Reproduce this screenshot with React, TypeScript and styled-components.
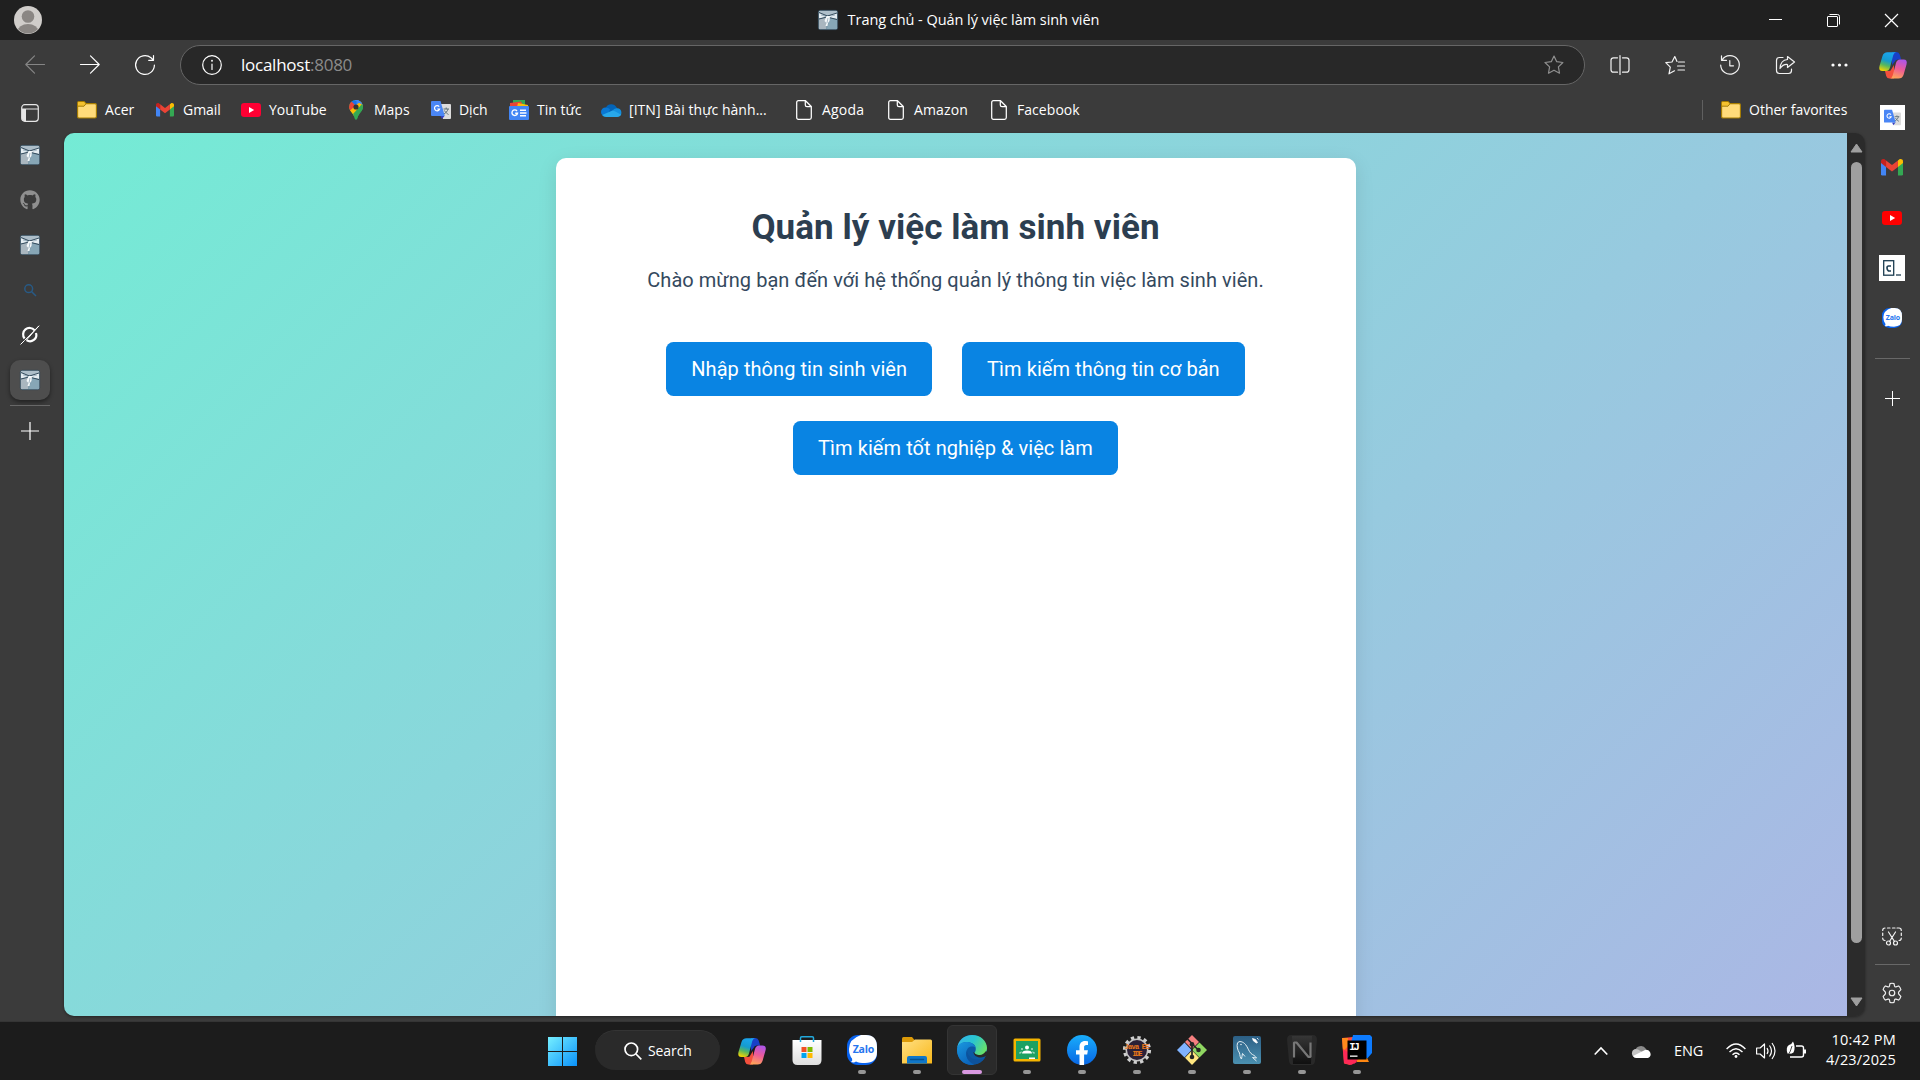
import React from "react";
import styled, { createGlobalStyle } from "styled-components";
import { FaGithub } from "react-icons/fa";

const Global = createGlobalStyle`
  * { box-sizing: border-box; }
  html, body { margin: 0; padding: 0; background: #3b3b3b; }
  body { width: 1920px; height: 1080px; overflow: hidden; font-family: "Open Sans", "Noto Sans", sans-serif; color: #fff; }
  svg { display: block; flex: none; overflow: visible; }
`;

const Desktop = styled.div`
  width: 1920px; height: 1080px; display: flex; flex-direction: column; background: #3b3b3b; overflow: hidden;
`;
const TitleBar = styled.header`
  height: 40px; flex: none; background: #202020; display: grid; grid-template-columns: 1fr auto 1fr; align-items: center;
`;
const AvatarSlot = styled.div`padding-left: 14px;`;
const TitleGroup = styled.div`
  display: flex; align-items: center; gap: 10px; padding-right: 3px;
`;
const Label = styled.span<{ $size?: number; $ls?: number; $color?: string }>`
  font-size: ${(p) => p.$size ?? 14}px;
  letter-spacing: ${(p) => p.$ls ?? 0}px;
  color: ${(p) => p.$color ?? "#fff"};
  line-height: 20px; white-space: nowrap;
`;
const WindowButtons = styled.div`display: flex; justify-content: flex-end;`;
const WindowButton = styled.div`
  width: 58px; height: 40px; display: flex; align-items: center; justify-content: center;
`;
const Toolbar = styled.div`
  height: 50px; flex: none; display: flex; align-items: center; padding-left: 7px;
`;
const ToolCell = styled.div<{ $w?: number }>`
  width: ${(p) => p.$w ?? 55}px; height: 50px; display: flex; align-items: center; justify-content: center;
`;
const AddressBar = styled.div`
  width: 1405px; height: 40px; margin: 0 7px 0 8px; border: 1px solid #666; border-radius: 20px; background: #282828;
  display: flex; align-items: center; padding: 0 20px 0 21px;
`;
const Url = styled.span`
  flex: 1; margin-left: 19px; font-size: 17px; line-height: 24px; letter-spacing: -0.25px; color: #fff;
  i { font-style: normal; color: #8b8b8b; }
`;
const Body = styled.div`
  height: 931px; flex: none; display: grid; grid-template-columns: 64px 1801px 55px;
`;
const LeftRail = styled.aside`
  padding: 5px 0 0 10px; display: flex; flex-direction: column; width: 50px;
`;
const RailTab = styled.div<{ $active?: boolean; $h?: number }>`
  width: 40px; height: ${(p) => p.$h ?? 40}px; margin-bottom: 5px; border-radius: 10px;
  display: flex; align-items: center; justify-content: center; flex: none;
  background: ${(p) => (p.$active ? "#4e4e4e" : "transparent")};
  box-shadow: ${(p) => (p.$active ? "0 2px 4px rgba(0,0,0,.45)" : "none")};
`;
const Rule = styled.div<{ $w: number }>`width: ${(p) => p.$w}px; height: 1px; background: #686868; flex: none;`;
const Center = styled.main`display: flex; flex-direction: column;`;
const Bookmarks = styled.nav`
  height: 43px; padding: 0 0 3px 13px; display: flex; align-items: center;
`;
const Bookmark = styled.div<{ $w: number }>`
  width: ${(p) => p.$w}px; display: flex; align-items: center; gap: 8px; flex: none;
`;
const IconSlot = styled.div`width: 20px; height: 20px; display: flex; align-items: center; justify-content: center; flex: none;`;
const OtherFavorites = styled.div`
  margin-left: auto; width: 163px; padding-left: 18px; border-left: 1px solid #606060; height: 20px;
  display: flex; align-items: center; gap: 8px;
`;
const Viewport = styled.div`
  height: 883px; display: flex; border-radius: 10px; overflow: hidden; box-shadow: 0 1px 3px rgba(0,0,0,.4);
`;
const Page = styled.div`
  width: 1783px; height: 933px; padding-top: 25px; background: linear-gradient(135deg, #74ebd5, #acb6e5);
  font-family: Roboto, sans-serif; display: flex; justify-content: center;
`;
const Card = styled.section`
  width: 800px; height: 883px; background: #fff; border-radius: 10px; box-shadow: 0 5px 19px rgba(0,0,0,.1);
  padding-top: 49px; text-align: center;
`;
const Heading = styled.h1`
  margin: 0; font-size: 35px; line-height: 41px; font-weight: 700; color: #2c3e50; letter-spacing: 0.05px;
`;
const Intro = styled.p`
  margin: 18px 0 0; font-size: 20px; line-height: 28px; color: #34495e; letter-spacing: 0.045px;
`;
const Actions = styled.div`
  margin-top: 48px; display: flex; flex-wrap: wrap; justify-content: center; gap: 25px 30px;
`;
const Action = styled.button<{ $ls: number }>`
  height: 54px; border: 0; border-radius: 7.5px; background: #0984e3; color: #fff; padding: 0 25px;
  font-family: Roboto, sans-serif; font-size: 20px; font-weight: 400; letter-spacing: ${(p) => p.$ls}px;
`;
const Scrollbar = styled.div`
  width: 18px; background: #2b2b2b; display: flex; flex-direction: column; align-items: center; padding: 10px 0 9px;
`;
const Thumb = styled.div`width: 11px; height: 781px; margin: 9px 0 auto; border-radius: 6px; background: #9f9f9f;`;
const RightRail = styled.aside`display: flex; flex-direction: column; align-items: center; padding: 2px 1px 0 0;`;
const RailApp = styled.div<{ $h?: number }>`
  height: ${(p) => p.$h ?? 50}px; width: 50px; display: flex; align-items: center; justify-content: center; flex: none;
`;
const WhiteTile = styled.div<{ $s: number }>`
  width: ${(p) => p.$s}px; height: ${(p) => p.$s}px; background: #fff; display: flex; align-items: center; justify-content: center;
`;
const Grow = styled.div`flex: 1;`;
const Taskbar = styled.footer`
  height: 59px; flex: none; background: #1c1c1c; border-top: 1px solid #353535; display: flex; padding-left: 535px;
`;
const StartSlot = styled.div<{ $w?: number }>`width: ${(p) => p.$w ?? 55}px; display: flex; align-items: center; justify-content: center;`;
const SearchPill = styled.div`
  width: 125px; height: 40px; margin: 8px 5px 0; border-radius: 20px; background: #2a2a2a; border-top: 1px solid #343434;
  display: flex; align-items: center; padding-left: 29px; gap: 6px;
`;
const TaskApp = styled.div<{ $active?: boolean }>`
  width: 50px; height: 50px; margin: 3px 2.5px 0; border-radius: 6px; display: flex; flex-direction: column; align-items: center;
  background: ${(p) => (p.$active ? "#2a2a2a" : "transparent")};
  border: 1px solid ${(p) => (p.$active ? "#343434" : "transparent")};
  padding-top: 9px;
`;
const Running = styled.div<{ $active?: boolean }>`
  width: ${(p) => (p.$active ? 20 : 8)}px; height: 4px; border-radius: 2px; margin-top: 5px;
  background: ${(p) => (p.$active ? "#d898e0" : "#969696")};
`;
const Tray = styled.div`margin-left: auto; width: 326px; display: flex; align-items: center; padding-right: 24px;`;
const TrayItem = styled.div<{ $w: number }>`width: ${(p) => p.$w}px; display: flex; align-items: center; flex: none;`;
const Clock = styled.div`margin-left: auto; display: flex; flex-direction: column; align-items: flex-end; margin-top: -2px;`;

type LineProps = { size?: number; stroke?: string; sw?: number; children: React.ReactNode };
const Line = ({ size = 20, stroke = "#f2f2f2", sw = 1.2, children }: LineProps) => (
  <svg width={size} height={size} viewBox={`0 0 ${size} ${size}`} fill="none" stroke={stroke} strokeWidth={sw} strokeLinecap="round" strokeLinejoin="round">{children}</svg>
);

const Avatar = () => (
  <svg width="28" height="28" viewBox="0 0 28 28">
    <clipPath id="av"><circle cx="14" cy="14" r="13.4" /></clipPath>
    <circle cx="14" cy="14" r="14" fill="#d0cdca" />
    <g clipPath="url(#av)" fill="#8a8683"><circle cx="14" cy="10.5" r="6.3" /><ellipse cx="14" cy="25.5" rx="10.5" ry="7.5" /></g>
  </svg>
);
const BowIcon = () => (
  <svg width="20" height="20" viewBox="0 0 20 20">
    <rect x=".3" y=".3" width="19.4" height="19.4" rx="2" fill="#7d99a9" stroke="#2d4558" strokeWidth=".6" />
    <path d="M1 1h18v5L10 5 1 6z" fill="#aebfca" />
    <path d="M1 9l8-2-1 12H1z" fill="#a9b6bf" />
    <path d="M12 8l7 2v9H9z" fill="#87a6b6" />
    <path d="M1 3l8 3 2 0 8-3v6l-7-1.500 M1 3v5.500l7-1.500" fill="#e4ecf1" />
    <path d="M1 2.500l8.500 3.500L19 3M1 9l8-2 2 .500 8 2" stroke="#283f51" strokeWidth=".9" fill="none" />
    <path d="M8.500 6h3.500l-.5 5-1.500 2-.5 3H7.500l1-3-2-2z" fill="#f4f8fa" />
    <path d="M3 5l4 1M13 6l4-1M10 8l-1 5" stroke="#8ba2b1" strokeWidth=".7" />
  </svg>
);
const Folder = () => (
  <svg width="20" height="18" viewBox="0 0 20 18">
    <path d="M.6 2Q.6.6 2 .6h5l2 2H18Q19.400 2.600 19.400 4v11.500Q19.400 17 18 17H2Q.6 17 .6 15.500z" fill="#ffdb7a" stroke="#a67c00" strokeWidth="1.100" />
    <path d="M1.100 5V2q0-.9.9-.9h5l1.600 1.700L7 4.800z" fill="#f5c12e" /><path d="M1 5.200h6l2-2.500" stroke="#a67c00" fill="none" />
  </svg>
);
const Gmail = ({ w = 18 }: { w?: number }) => (
  <svg width={w} height={w * 0.76} viewBox="0 0 24 18">
    <path d="M0 3v13.500Q0 18 1.600 18H5.500V7z" fill="#4285f4" />
    <path d="M18.500 7v11h3.900Q24 18 24 16.500V3z" fill="#34a853" />
    <path d="M18.500 1.500V8.500L24 4.300V2.400C24 .3 21.500-.8 19.800.500z" fill="#fbbc04" />
    <path d="M5.500 8.500V1.500L12 6.400l6.500-4.900v7L12 13.400z" fill="#ea4335" />
    <path d="M0 2.400v1.900l5.500 4.200v-7L4.200.500C2.500-.8 0 .3 0 2.400z" fill="#c5221f" />
  </svg>
);
const YouTube = ({ c = "#ff0033" }: { c?: string }) => (
  <svg width="20" height="14" viewBox="0 0 20 14"><rect width="20" height="14" rx="3.200" fill={c} /><path d="M8 4l5.200 3L8 10z" fill="#fff" /></svg>
);
const Maps = () => (
  <svg width="14" height="20" viewBox="0 0 14 20">
    <clipPath id="pin"><path d="M7 0a7 7 0 0 1 7 7c0 4-4.500 6-5.700 11.500C8 20 6 20 5.700 18.500 4.500 13 0 11 0 7a7 7 0 0 1 7-7z" /></clipPath>
    <g clipPath="url(#pin)">
      <rect width="14" height="20" fill="#34a853" /><path d="M0 0h9L7 7 1.500 3z" fill="#1a73e8" /><path d="M0 2l2-1 5 5-5 6-2-3z" fill="#ea4335" />
      <path d="M7 7l7-5v-2H8z" fill="#4285f4" /><path d="M1 10.500L12 1l2 5-9 10z" fill="#fbbc04" /><path d="M4 14L14 3v8L7 20z" fill="#34a853" /><path d="M14 5L5 0h9z" fill="#4285f4" />
    </g><circle cx="7" cy="7" r="2.600" fill="#333" />
  </svg>
);
const Translate = ({ s = 20 }: { s?: number }) => (
  <svg width={s} height={s} viewBox="0 0 20 20">
    <path d="M9 4h10q1 0 1 1v13q0 1-1 1h-7z" fill="#dcdcdc" />
    <path d="M12.500 9h5.500M15.200 7.500V9M17 9c-.5 2.500-2.500 4-4 5M13.500 10.500c1 2 2.500 3 4 4" stroke="#5c7078" fill="none" strokeWidth="1" />
    <path d="M9.500 16h4L11 19z" fill="#3740c0" /><path d="M1 1h8.500l4.300 15H1q-1 0-1-1V2q0-1 1-1z" fill="#4a86f5" />
    <path d="M8.200 6.600A2.600 2.600 0 1 0 8.600 9H6.300" stroke="#fff" strokeWidth="1.200" fill="none" />
  </svg>
);
const News = () => (
  <svg width="20" height="20" viewBox="0 0 20 20">
    <path d="M4 0h12v6H4z" fill="#34a853" /><path d="M1 3l11-1.500L15 7H1z" fill="#ea4335" /><path d="M9 3l10 2v2H8z" fill="#fbbc04" />
    <rect y="6" width="20" height="14" rx="1" fill="#4285f4" />
    <path d="M8 11a2.800 2.800 0 1 0 .5 2.300H6.200M11 10.300h6M11 13h6.500M11 15.700h6" stroke="#fff" strokeWidth="1.400" fill="none" />
  </svg>
);
const OneDrive = () => (
  <svg width="21" height="13" viewBox="0 0 21 13">
    <path d="M5 11A4.400 4.400 0 0 1 5 3.500 6 6 0 0 1 15.500 3.300L17 6z" fill="#0364b8" /><path d="M4.500 3.500c2 0 3 .8 4.500 1.700L6 12.500H4.500a4.500 4.500 0 0 1 0-9z" fill="#0a78d4" />
    <path d="M12 6a5 5 0 0 1 4-1.700A4.300 4.300 0 0 1 17 12.800z" fill="#1490df" /><path d="M1.200 11L12 6.300l8.300 4.500Q19 12.900 16.500 12.900H5Q2.500 12.900 1.200 11z" fill="#28a8ea" />
  </svg>
);
const PageIcon = () => (
  <svg width="16" height="20" viewBox="0 0 16 20" fill="none" stroke="#fff" strokeWidth="1.250" strokeLinejoin="round">
    <path d="M2.500.7H9.500L15.300 6.500V17.500Q15.300 19.300 13.500 19.300H2.500Q.7 19.300.7 17.500V2.500Q.7.7 2.500.7z" /><path d="M9.300.8V5q0 1.700 1.700 1.700h4.200" />
  </svg>
);
const Copilot = ({ id }: { id: string }) => (
  <svg width="28" height="27" viewBox="0 0 28 27">
    <defs>
      <linearGradient id={id + "a"} x1=".6" y1="0" x2=".3" y2="1"><stop offset="0" stopColor="#1ba5ee" /><stop offset=".45" stopColor="#159bce" /><stop offset=".7" stopColor="#56b75f" /><stop offset="1" stopColor="#eed305" /></linearGradient>
      <linearGradient id={id + "b"} x1=".7" y1="0" x2=".4" y2="1"><stop offset="0" stopColor="#ad55e8" /><stop offset=".5" stopColor="#ed5b98" /><stop offset="1" stopColor="#ffa259" /></linearGradient>
    </defs>
    <path d="M13 0h4.500q2.500 0 3.200 2.500l1.500 5h-3.500q-2.500 0-3.200 2.500L13 13z" fill="#1840c8" />
    <path d="M15 26.500h-4.500Q8 26.500 7.200 24L6 19h4q2 0 2.800-2.500L15 13z" fill="#f4503d" />
    <path d="M8.500.3H17Q15 .7 14.300 3L11 15.500Q10 19 7 19H3.500Q-.8 19 .5 14L3.500 4Q4.700.3 8.500.3z" fill={`url(#${id}a)`} />
    <path d="M19.500 26.500H11Q13 26 13.700 23.500L17 11Q18 7.500 21 7.500h3.500Q28.800 7.500 27.500 12.500L24.500 23q-1.200 3.500-5 3.500z" fill={`url(#${id}b)`} />
  </svg>
);
const Zalo = ({ s = 20 }: { s?: number }) => (
  <svg width={s} height={s} viewBox="0 0 30 30">
    <rect width="30" height="30" rx="11" fill="#0862ee" />
    <path d="M14 0h5Q30 0 30 12v5q0 11-12 11-6 0-9-1.500-2 1.500-5 .5Q6 25.500 5 23.500 2 20 2 14 2 4 14 0z" fill="#fff" />
    <text x="16.500" y="18" fontSize="10.500" fontWeight="700" textAnchor="middle" textLength="21.500" fill="#2675ef" fontFamily="Open Sans">Zalo</text>
  </svg>
);
const Windows = () => (
  <svg width="29" height="29" viewBox="0 0 29 29">
    <defs><linearGradient id="win" gradientUnits="userSpaceOnUse" x1="0" y1="0" x2="29" y2="29"><stop offset="0" stopColor="#76efff" /><stop offset="1" stopColor="#0a92fb" /></linearGradient></defs>
    <path d="M0 0h14v14H0zM15 0h14v14H15zM0 15h14v14H0zM15 15h14v14H15z" fill="url(#win)" />
  </svg>
);
const Store = () => (
  <svg width="30" height="30" viewBox="0 0 30 30">
    <defs><linearGradient id="bag" x1="0" y1="0" x2="0" y2="1"><stop offset="0" stopColor="#fff" /><stop offset="1" stopColor="#dedede" /></linearGradient></defs>
    <path d="M.5 5h29v20q0 5-5 5h-19q-5 0-5-5z" fill="url(#bag)" /><path d="M8.500 7V3q0-1.200 1.200-1.200h10.600q1.200 0 1.200 1.200v4" stroke="#22a9dc" strokeWidth="1.500" fill="none" />
    <path d="M9.500 12h5v5h-5z" fill="#f25022" /><path d="M15.500 12h5v5h-5z" fill="#7fba00" /><path d="M9.500 18h5v5h-5z" fill="#00a4ef" /><path d="M15.500 18h5v5h-5z" fill="#ffb900" />
  </svg>
);
const Explorer = () => (
  <svg width="30" height="30" viewBox="0 0 30 30">
    <defs><linearGradient id="fold" x1="0" y1="0" x2="1" y2="1"><stop offset="0" stopColor="#ffe083" /><stop offset="1" stopColor="#f9b81b" /></linearGradient></defs>
    <path d="M0 8V3.500Q0 2 1.500 2H10l3 3.500v3z" fill="#dc9a08" /><path d="M0 7h10l3-2.500h15.500Q30 4.500 30 6v22.500H0z" fill="url(#fold)" />
    <path d="M5 28.500V23q0-2 2-2h16q2 0 2 2v5.500z" fill="#1077c8" /><path d="M8.500 24.500h13" stroke="#06528f" strokeWidth="1.400" strokeLinecap="round" />
  </svg>
);
const Edge = () => (
  <svg width="30" height="30" viewBox="0 0 30 30">
    <defs>
      <linearGradient id="ea" x1="0" y1=".2" x2="1" y2=".6"><stop offset="0" stopColor="#35b5e8" /><stop offset=".5" stopColor="#2ac5cf" /><stop offset="1" stopColor="#68e26a" /></linearGradient>
      <linearGradient id="eb" x1="0" y1="0" x2=".6" y2="1"><stop offset="0" stopColor="#1a99e0" /><stop offset="1" stopColor="#0b63ba" /></linearGradient>
    </defs>
    <circle cx="15" cy="15" r="15" fill="#0c59a4" />
    <path d="M.1 13.500C1 5 7.500 0 15 0c9 0 15 6.300 15 13 0 4.500-3.300 7.200-7 7.200-3.500 0-5.500-1.200-5.500-2.200 0-.8 1.300-1.500 1.300-4C18.800 9 14 7 9.500 7 4 7 .8 11 .1 13.500z" fill="url(#ea)" />
    <path d="M0 15C0 10.500 4 7 9.300 7c5 0 9 2.700 9.400 6-1.700-2-6-2-8 .5-4 5-.5 13.500 6.500 16.300C7 31 0 24 0 15z" fill="url(#eb)" />
    <path d="M28 22.500c-2.500 4-6.500 6.500-10.500 6.600C11 27 8 21 10 16c1 5 5 8.500 10.500 8.500 3 0 5.500-1 7.500-2z" fill="#0d529c" />
    <path d="M16.500 17c0 3 3 5.500 7 5.500 2.800 0 5-1.300 5.700-1.800L31 18l-2-2c-2 2.800-4 4-6 4-3.500 0-6-1.500-6-3z" fill="#2a2a2a" />
  </svg>
);
const Classroom = () => (
  <svg width="30" height="30" viewBox="0 0 30 30">
    <rect x="1.500" y="3.500" width="27" height="23" rx="1.500" fill="#f4b400" /><rect x="4" y="6" width="22" height="18" fill="#1da163" />
    <circle cx="15" cy="12.500" r="2" fill="#fff" /><path d="M10 18.500q0-3 5-3t5 3z" fill="#fff" /><g fill="#a5d9bd"><circle cx="10" cy="14" r="1.100" /><circle cx="20" cy="14" r="1.100" /><path d="M7 18.500q0-2 3-2L9 18.500zM23 18.500q0-2-3-2l1 2z" /></g>
    <path d="M17 22.500h6V24h-6z" fill="#fff" />
  </svg>
);
const Facebook = () => (
  <svg width="30" height="30" viewBox="0 0 30 30">
    <defs><linearGradient id="fb" x1="0" y1="0" x2="0" y2="1"><stop offset="0" stopColor="#19adfb" /><stop offset="1" stopColor="#0866e4" /></linearGradient></defs>
    <circle cx="15" cy="15" r="15" fill="url(#fb)" />
    <path d="M12.500 30V19.500H9V15.200h3.500V12.200c0-4 2.200-6.200 5.500-6.200 1.600 0 3 .3 3 .3v3.600h-1.700c-1.700 0-2.200 1-2.200 2.100v3.200h3.800l-.7 4.300h-3.100V30z" fill="#fff" />
  </svg>
);
const Eclipse = () => (
  <svg width="30" height="30" viewBox="0 0 30 30">
    <circle cx="15" cy="15" r="12.400" fill="none" stroke="#cfcfcf" strokeWidth="3.400" strokeDasharray="3.250 3.243" />
    <circle cx="15" cy="15" r="10.700" fill="#2b2036" stroke="#c4c4c4" strokeWidth="1.500" />
    <text x="15" y="14" fontSize="7" fontWeight="700" fill="#ef7a1a" textAnchor="middle" fontFamily="Liberation Mono" textLength="25">Java EE</text>
    <text x="15.500" y="20.500" fontSize="7" fontWeight="700" fill="#ef7a1a" textAnchor="middle" fontFamily="Liberation Mono" textLength="10">IDE</text>
  </svg>
);
const Git = () => (
  <svg width="30" height="30" viewBox="0 0 30 30">
    <path d="M15 0l7 7-7 7-7-7z" fill="#f57f7f" /><path d="M7.500 7.500l7 7.500-7 7.500L0 15z" fill="#80b3ff" /><path d="M22.500 7.500L30 15l-7.500 7.500L15 15z" fill="#8fd661" /><path d="M15 15.500l7 7.200L15 30l-7-7.300z" fill="#ffe680" />
    <path d="M10.500 4l4.500 4.500v14M15 9l6.500 6" stroke="#252525" strokeWidth="1.700" fill="none" /><circle cx="15" cy="9.300" r="2.300" fill="#252525" /><circle cx="21.500" cy="15" r="2.300" fill="#252525" /><circle cx="15" cy="22" r="2.300" fill="#252525" />
  </svg>
);
const MySql = () => (
  <svg width="30" height="30" viewBox="0 0 30 30">
    <defs><linearGradient id="my" x1="0" y1="0" x2="0" y2="1"><stop offset="0" stopColor="#2c5f85" /><stop offset="1" stopColor="#4b90b0" /></linearGradient></defs>
    <rect x="1" y="1" width="28" height="28" rx="2" fill="url(#my)" />
    <g fill="none" stroke="#e5eff4" strokeWidth="1" strokeLinejoin="round"><path d="M9.500 24C8 23 8 20 7.500 18 5.500 15 4.500 11 5.500 8 7 5.500 11 6.500 13.500 9.500c2.500 3 3 6.500 5.500 9 2 1.500 4 2 5.500 4.500l-4-.5 4 3.500M9.500 24c.5-2 .5-3.500 1-5.500l2.500 3" /></g>
    <circle cx="9" cy="9.500" r=".7" fill="#fff" /><path d="M20.500 3.500l3 1 2 3-1 .5-3-2zM25 3l1.500 1.500" stroke="#fff" fill="#fff" strokeWidth=".8" />
  </svg>
);
const NIcon = () => (
  <svg width="30" height="30" viewBox="0 0 30 30">
    <defs><linearGradient id="nn" x1="0" y1="0" x2="0" y2="1"><stop offset="0" stopColor="#363636" /><stop offset="1" stopColor="#101010" /></linearGradient></defs>
    <path d="M4 0h22q4 0 4 5l-2 21q-.5 4-4 4H6q-3.500 0-4-4L0 5q0-5 4-5z" fill="#292929" /><path d="M5 1h20l-1 28H6z" fill="url(#nn)" />
    <path d="M7 22.500V7.500h2.500l12 14.500h2V7.500" stroke="#777" strokeWidth="2.200" fill="none" strokeLinejoin="bevel" />
  </svg>
);
const IntelliJ = () => (
  <svg width="30" height="30" viewBox="0 0 30 30">
    <path d="M0 3l11-1 1 20-4 8-6-1.500z" fill="#ff4b3c" /><path d="M0 3l6 0v8L1 17z" fill="#ff8a1c" /><path d="M1 14l6 4 8 9-6 3-7-2z" fill="#fe2857" />
    <path d="M11 0h17l2 2v16l-6 7L8 12z" fill="#0d7bfe" /><path d="M13 23h12l2 4H15z" fill="#fe8712" /><path d="M11 23h6l-5 6z" fill="#fe2857" />
    <path d="M5.500 5.500h19v19h-19z" fill="#000" /><path d="M8 20.500h7.500v1.300H8z" fill="#fff" />
    <text x="12.500" y="15.300" fontSize="10.500" fontWeight="700" textAnchor="middle" fill="#fff" fontFamily="Liberation Mono" textLength="10.500">IJ</text>
  </svg>
);
const Grok = () => (
  <svg width="20" height="20" viewBox="0 0 20 20" fill="none" stroke="#fff">
    <path d="M14.500 5.300A6.300 6.300 0 0 0 4.600 13.500M6.500 15.200A6.300 6.300 0 0 0 16 8" strokeWidth="2.200" /><path d="M.5 19.500L4.500 15.500 19 .8 6.500 15" strokeWidth="1" />
  </svg>
);

const STAR = "M10 1l2.700 5.700 6.200.8-4.500 4.400 1.100 6.300L10 15.200l-5.500 3 1.100-6.300L1 7.500l6.300-.8z";
const Plus = ({ c = "#fff", s = 17 }: { c?: string; s?: number }) => (
  <svg width={s} height={s} viewBox="0 0 17 17" stroke={c} strokeWidth="1.150"><path d="M8.500 0v17M0 8.500h17" /></svg>
);

const marks = [
  { t: "Acer", w: 78, ls: 0.05, i: <Folder /> }, { t: "Gmail", w: 86, ls: -0.05, i: <Gmail /> },
  { t: "YouTube", w: 105, ls: 0, i: <YouTube /> }, { t: "Maps", w: 85, ls: 0, i: <Maps /> },
  { t: "Dịch", w: 78, ls: -0.1, i: <Translate /> }, { t: "Tin tức", w: 92, ls: 0, i: <News /> },
  { t: "[ITN] Bài thực hành...", w: 193, ls: 0.05, i: <OneDrive /> }, { t: "Agoda", w: 92, ls: 0.2, i: <PageIcon /> },
  { t: "Amazon", w: 103, ls: 0.15, i: <PageIcon /> }, { t: "Facebook", w: 100, ls: 0.05, i: <PageIcon /> },
];
const apps = [
  { n: "store", i: <Store />, run: false }, { n: "zalo", i: <Zalo s={30} />, run: true }, { n: "files", i: <Explorer />, run: true },
  { n: "edge", i: <Edge />, run: true, active: true }, { n: "class", i: <Classroom />, run: true }, { n: "fb", i: <Facebook />, run: true },
  { n: "eclipse", i: <Eclipse />, run: true }, { n: "git", i: <Git />, run: true }, { n: "mysql", i: <MySql />, run: true },
  { n: "n", i: <NIcon />, run: true }, { n: "ij", i: <IntelliJ />, run: true },
];

export default function App() {
  return (
    <Desktop>
      <Global />
      <TitleBar>
        <AvatarSlot><Avatar /></AvatarSlot>
        <TitleGroup><BowIcon /><Label $size={14.5} $ls={-0.05}>Trang chủ - Quản lý việc làm sinh viên</Label></TitleGroup>
        <WindowButtons>
          <WindowButton><svg width="13" height="13" stroke="#fff"><path d="M0 5.500h13" /></svg></WindowButton>
          <WindowButton><svg width="13" height="13" viewBox="0 0 13 13" stroke="#fff" fill="none"><rect x=".5" y="2.500" width="10" height="10" rx=".5" /><path d="M2.500.5H10.500q2 0 2 2v8" /></svg></WindowButton>
          <WindowButton><svg width="13" height="13" stroke="#fff" strokeWidth="1.200"><path d="M0 0l13 13M13 0L0 13" /></svg></WindowButton>
        </WindowButtons>
      </TitleBar>
      <Toolbar>
        <ToolCell><Line stroke="#858585"><path d="M19.500 9.500H.8M9.500.9L.8 9.500l8.700 8.600" /></Line></ToolCell>
        <ToolCell><Line stroke="#fff"><path d="M.5 9.500h18.700M10.500.9l8.700 8.600-8.700 8.600" /></Line></ToolCell>
        <ToolCell><Line stroke="#fff"><path d="M19.400 10A9.400 9.400 0 1 1 16 2.800L18.500 5.200M18.500.5v4.800h-4.800" /></Line></ToolCell>
        <AddressBar>
          <Line stroke="#fff"><circle cx="10" cy="10" r="9.300" /><path d="M10 9v5.500" /><circle cx="10" cy="5.800" r=".4" /></Line>
          <Url>localhost<i>:8080</i></Url>
          <Line stroke="#8f8f8f"><path d={STAR} /></Line>
        </AddressBar>
        <ToolCell><Line><path d="M7.500 2.800h-4Q1 2.800 1 5.300v9.400q0 2.500 2.500 2.500h4M12.500 2.800h4Q19 2.800 19 5.300v9.400q0 2.500-2.500 2.500h-4M10 .5v19" /></Line></ToolCell>
        <ToolCell><Line><path d="M19.500 11h-7M19.500 7h-6M19.500 15H13M12 6.500L9.800 1.500 7 7 .8 7.700l4.500 4.500L4 18.800l5.500-3" /></Line></ToolCell>
        <ToolCell><Line><path d="M2.200 4.800A9.300 9.300 0 1 1 .7 10M1.500.8v4.500h5M9.800 5.500v5.300h3.700" /></Line></ToolCell>
        <ToolCell><Line><path d="M8 2.500H4.500q-3 0-3 3V15.500q0 3 3 3h9q3 0 3-3V14M12.500 1.500l7 5.500-7 5.500V9.500Q8 9 5 13.500 5.500 5 12.500 4.500z" /></Line></ToolCell>
        <ToolCell><svg width="17" height="4" fill="#fff"><circle cx="2" cy="2" r="1.600" /><circle cx="8.500" cy="2" r="1.600" /><circle cx="15" cy="2" r="1.600" /></svg></ToolCell>
        <ToolCell $w={52}><Copilot id="c1" /></ToolCell>
      </Toolbar>
      <Body>
        <LeftRail>
          <RailTab $h={35}><svg width="18" height="18" viewBox="0 0 18 18"><rect x=".7" y=".7" width="16.600" height="16.600" rx="3" fill="none" stroke="#e6e6e6" strokeWidth="1.200" /><path d="M1 5h16" stroke="#e6e6e6" /><path d="M1 5h4v12H3Q1 17 1 15z" fill="#e6e6e6" /></svg></RailTab>
          <RailTab><BowIcon /></RailTab>
          <RailTab><FaGithub size={20} color="#8f8f8f" /></RailTab>
          <RailTab><BowIcon /></RailTab>
          <RailTab><svg width="12" height="12" viewBox="0 0 12 12" fill="none" stroke="#285a85" strokeWidth="1.500"><circle cx="4.700" cy="4.700" r="3.900" /><path d="M7.500 7.500L12 12" /></svg></RailTab>
          <RailTab><Grok /></RailTab>
          <RailTab $active><BowIcon /></RailTab>
          <Rule $w={40} />
          <RailTab $h={50}><Plus s={18} /></RailTab>
        </LeftRail>
        <Center>
          <Bookmarks>
            {marks.map((m) => (
              <Bookmark key={m.t} $w={m.w}><IconSlot>{m.i}</IconSlot><Label $ls={m.ls}>{m.t}</Label></Bookmark>
            ))}
            <OtherFavorites><IconSlot><Folder /></IconSlot><Label>Other favorites</Label></OtherFavorites>
          </Bookmarks>
          <Viewport>
            <Page>
              <Card>
                <Heading>Quản lý việc làm sinh viên</Heading>
                <Intro>Chào mừng bạn đến với hệ thống quản lý thông tin việc làm sinh viên.</Intro>
                <Actions>
                  <Action $ls={0.06}>Nhập thông tin sinh viên</Action>
                  <Action $ls={0.06}>Tìm kiếm thông tin cơ bản</Action>
                  <Action $ls={0.06}>Tìm kiếm tốt nghiệp &amp; việc làm</Action>
                </Actions>
              </Card>
            </Page>
            <Scrollbar>
              <svg width="13" height="10"><path d="M6.500 1L12 9H1z" fill="#9f9f9f" stroke="#9f9f9f" strokeLinejoin="round" /></svg>
              <Thumb />
              <svg width="13" height="10"><path d="M6.500 9L12 1H1z" fill="#9f9f9f" stroke="#9f9f9f" strokeLinejoin="round" /></svg>
            </Scrollbar>
          </Viewport>
        </Center>
        <RightRail>
          <RailApp><WhiteTile $s={25}><Translate s={17} /></WhiteTile></RailApp>
          <RailApp><Gmail w={22} /></RailApp>
          <RailApp $h={51}><YouTube c="#ff0000" /></RailApp>
          <RailApp><WhiteTile $s={26}><svg width="18" height="16" viewBox="0 0 18 16" fill="none" stroke="#1c3c50"><rect x=".7" y=".7" width="10" height="14.500" strokeWidth="1.300" /><path d="M8 6H5.500Q4 6 4 8t1.500 3H8" strokeWidth="1.600" /><path d="M13 15h5" strokeWidth="1.300" /></svg></WhiteTile></RailApp>
          <RailApp $h={49}><Zalo /></RailApp>
          <RailApp $h={16} />
          <Rule $w={35} />
          <RailApp $h={79}><Plus s={15} /></RailApp>
          <Grow />
          <RailApp $h={56}><Line><path d="M3 14.500Q.7 14.500.7 12M.7 9.500V7M.7 4.500Q.7 2 3 2M5.500 2h2.500M10.500 2H13M15 2h2Q19.300 2 19.300 4.500M19.300 7v2.500M19.300 12q0 2.500-2.300 2.500M6.500 6l6 9.500M13.500 6l-6 9.500" /><circle cx="6.500" cy="17" r="2" /><circle cx="13.500" cy="17" r="2" /></Line></RailApp>
          <Rule $w={35} />
          <RailApp $h={56}><svg width="22" height="22" viewBox="0 0 24 24" fill="none" stroke="#eee" strokeWidth="1.300" strokeLinejoin="round"><circle cx="12" cy="12" r="3" /><path d="M9.800 1.700Q12 1 14.200 1.700L14.800 4.600q.4 1 1.500.7L19.200 4.300Q21 6 21.700 8.400L19.500 10.600q-1 1.400 0 2.800l2.200 2.200Q21 18 19.200 19.700l-2.900-1q-1.100-.3-1.500.7l-.6 2.900Q12 23 9.800 22.300L9.200 19.400q-.4-1-1.500-.7l-2.900 1Q3 18 2.300 15.600L4.500 13.400q1-1.400 0-2.800L2.300 8.400Q3 6 4.800 4.300l2.900 1q1.100.3 1.500-.7z" /></svg></RailApp>
        </RightRail>
      </Body>
      <Taskbar>
        <StartSlot><Windows /></StartSlot>
        <SearchPill>
          <svg width="18" height="18" viewBox="0 0 18 18" fill="none" stroke="#fff" strokeWidth="1.700"><circle cx="7.300" cy="7.300" r="6.300" /><path d="M12 12l5.300 5.300" /></svg>
          <Label $ls={-0.1}>Search</Label>
        </SearchPill>
        <StartSlot $w={54}><Copilot id="c2" /></StartSlot>
        {apps.map((a) => (
          <TaskApp key={a.n} $active={a.active}>{a.i}{a.run && <Running $active={a.active} />}</TaskApp>
        ))}
        <Tray>
          <TrayItem $w={37}><svg width="14" height="8" fill="none" stroke="#fff" strokeWidth="1.600"><path d="M.7 7.500L7 1l6.300 6.500" /></svg></TrayItem>
          <TrayItem $w={43}><svg width="20" height="13" viewBox="0 0 20 13"><path d="M4 6a6 6 0 0 1 11-2l1 5z" fill="#8b8b8b" /><path d="M4 4l3 .5L13 8l-9 4.500A4.500 4.500 0 0 1 4 4z" fill="#c4c4c4" /><path d="M2 11l12-6q3-1 5 2 2 4-2 6H5q-2 0-3-2z" fill="#fff" /></svg></TrayItem>
          <TrayItem $w={52}><Label $size={14.5} $ls={-0.1}>ENG</Label></TrayItem>
          <TrayItem $w={30}><svg width="20" height="16" viewBox="0 0 20 16" fill="none" stroke="#fff" strokeWidth="1.400"><path d="M.6 6q9.400-10 18.800 0M3.500 9q6.500-6.500 13 0M6.500 11.700q3.500-3.500 7 0" /><circle cx="10" cy="13.500" r="1.400" fill="#fff" stroke="none" /></svg></TrayItem>
          <TrayItem $w={30}><svg width="20" height="18" viewBox="0 0 20 18" fill="none" stroke="#fff" strokeWidth="1.200" strokeLinejoin="round"><path d="M.6 6h3.500L8.500 2v14L4.100 12H.6zM11 6q2 3 0 6M13.500 3.500q4 5.500 0 11M16 1q6 8 0 16" /></svg></TrayItem>
          <TrayItem $w={22}><svg width="20" height="18" viewBox="0 0 20 18"><path d="M10 4h5.500q2 0 2 2v7q0 2-2 2H4" fill="none" stroke="#fff" strokeWidth="1.400" /><rect x="18" y="7.500" width="2" height="4" fill="#fff" /><path d="M7 -.5Q10 5 7.500 10.500 5 12.500 1.500 11.500-.5 5 3 3 6 2 7 -.5z" fill="#fff" /><path d="M6 4Q5 9 1 15" stroke="#1c1c1c" strokeWidth=".8" fill="none" /></svg></TrayItem>
          <Clock><Label $size={14.5} $ls={0.25}>10:42 PM</Label><Label $size={14.5} $ls={0.15}>4/23/2025</Label></Clock>
        </Tray>
      </Taskbar>
    </Desktop>
  );
}
